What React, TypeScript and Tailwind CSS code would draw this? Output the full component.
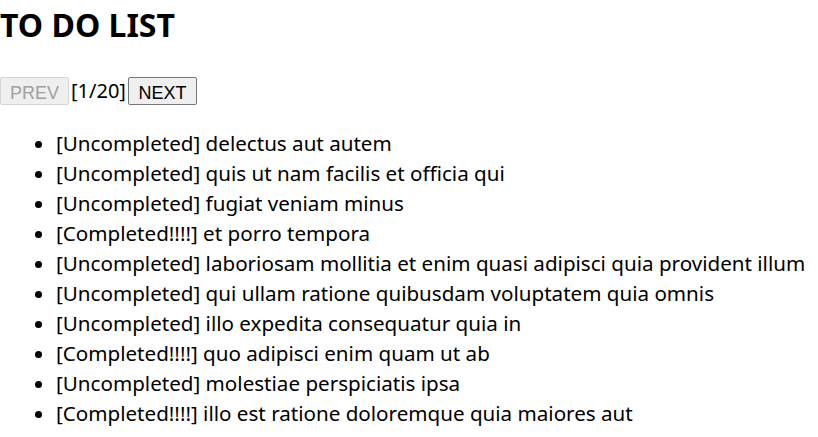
const todos: { done: boolean; title: string }[] = [
  { done: false, title: "delectus aut autem" },
  { done: false, title: "quis ut nam facilis et officia qui" },
  { done: false, title: "fugiat veniam minus" },
  { done: true, title: "et porro tempora" },
  { done: false, title: "laboriosam mollitia et enim quasi adipisci quia provident illum" },
  { done: false, title: "qui ullam ratione quibusdam voluptatem quia omnis" },
  { done: false, title: "illo expedita consequatur quia in" },
  { done: true, title: "quo adipisci enim quam ut ab" },
  { done: false, title: "molestiae perspiciatis ipsa" },
  { done: true, title: "illo est ratione doloremque quia maiores aut" },
];

const App = () => {
  return (
    <div className="font-['Noto_Sans',sans-serif] text-[20px] leading-[30px] text-black bg-white min-h-[437px]">
      <h1 className="text-[32px] leading-[50px] font-bold">TO DO LIST</h1>

      <div className="mt-[27px] flex items-center h-[28px]">
        <button
          disabled
          className="h-[28px] w-[69px] font-['Liberation_Sans',sans-serif] text-[18px] text-[#a0a0a0] bg-[#efefef] border border-[#d4d4d4] rounded-[2px]"
        >
          PREV
        </button>
        <span className="mx-[2px]">[1/20]</span>
        <button className="h-[28px] w-[69px] font-['Liberation_Sans',sans-serif] text-[18px] text-black bg-[#efefef] border border-[#767676] rounded-[2px]">
          NEXT
        </button>
      </div>

      <ul className="mt-[23px] pl-[56px] list-disc text-[20.6px]">
        {todos.map((t, i) => (
          <li key={i} className="pl-0 whitespace-nowrap">
            {t.done ? "[Completed!!!!]" : "[Uncompleted]"} {t.title}
          </li>
        ))}
      </ul>
    </div>
  );
};

export default App;
